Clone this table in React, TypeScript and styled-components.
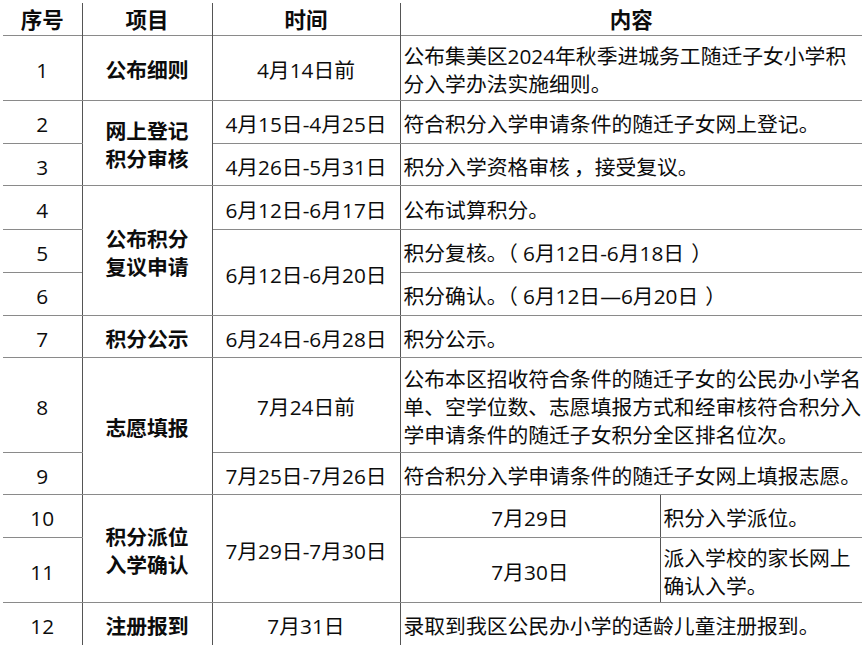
import styled, { createGlobalStyle } from "styled-components";

const GlobalStyle = createGlobalStyle`
  html, body {
    margin: 0;
    padding: 0;
    background: #fff;
  }
  body {
    font-family: "Open Sans", "Noto Sans CJK SC", sans-serif;
    color: #0c0c0c;
  }
`;

const Page = styled.div`
  padding: 3px 0 0 3px;
  width: 864px;
  height: 645px;
  box-sizing: border-box;
  overflow: hidden;
`;

const Table = styled.table`
  width: 859px;
  table-layout: fixed;
  border-collapse: collapse;
  font-size: 20.8px;
  line-height: 28px;
`;

const Row = styled.tr<{ $h: number }>`
  height: ${(p) => p.$h}px;
`;

const Cell = styled.td`
  padding: 5px 4px 0;
  vertical-align: middle;
  border-top: 1px solid #8a8a8a;
  border-bottom: 1px solid #8a8a8a;
  border-left: 1px solid #555;
  border-right: 1px solid #555;
  text-align: center;
  white-space: nowrap;
  &:first-child {
    border-left: none;
  }
  &:last-child {
    border-right: none;
  }
  tr:last-child > & {
    border-bottom: none;
  }
`;

const HeadCell = styled(Cell).attrs({ as: "th" })`
  border-top: none;
  font-weight: 700;
  font-size: 21.5px;
  padding-top: 3px;
`;

const SeqCell = styled(Cell)``;

const ItemCell = styled(Cell)`
  font-weight: 700;
`;

const TimeCell = styled(Cell)``;

const ContentCell = styled(Cell)`
  text-align: left;
  padding-left: 3px;
`;

// full-width punctuation gets a little air, as in the original rendering
const OpenParen = styled.span`
  margin-right: 5px;
`;

const CloseParen = styled.span`
  margin-left: 7px;
`;

const Comma = styled.span`
  padding-left: 4px;
`;

export default function App() {
  return (
    <>
      <GlobalStyle />
      <Page>
        <Table>
          <colgroup>
            <col style={{ width: 79 }} />
            <col style={{ width: 130 }} />
            <col style={{ width: 188 }} />
            <col style={{ width: 260 }} />
            <col style={{ width: 202 }} />
          </colgroup>
          <thead>
            <Row $h={32}>
              <HeadCell>序号</HeadCell>
              <HeadCell>项目</HeadCell>
              <HeadCell>时间</HeadCell>
              <HeadCell colSpan={2}>内容</HeadCell>
            </Row>
          </thead>
          <tbody>
            <Row $h={65}>
              <SeqCell>1</SeqCell>
              <ItemCell>公布细则</ItemCell>
              <TimeCell>4月14日前</TimeCell>
              <ContentCell colSpan={2}>
                公布集美区2024年秋季进城务工随迁子女小学积
                <br />
                分入学办法实施细则。
              </ContentCell>
            </Row>
            <Row $h={43}>
              <SeqCell>2</SeqCell>
              <ItemCell rowSpan={2}>
                网上登记
                <br />
                积分审核
              </ItemCell>
              <TimeCell>4月15日-4月25日</TimeCell>
              <ContentCell colSpan={2}>符合积分入学申请条件的随迁子女网上登记。</ContentCell>
            </Row>
            <Row $h={42}>
              <SeqCell>3</SeqCell>
              <TimeCell>4月26日-5月31日</TimeCell>
              <ContentCell colSpan={2}>
                积分入学资格审核<Comma>，</Comma>接受复议。
              </ContentCell>
            </Row>
            <Row $h={44}>
              <SeqCell>4</SeqCell>
              <ItemCell rowSpan={3}>
                公布积分
                <br />
                复议申请
              </ItemCell>
              <TimeCell>6月12日-6月17日</TimeCell>
              <ContentCell colSpan={2}>公布试算积分。</ContentCell>
            </Row>
            <Row $h={43}>
              <SeqCell>5</SeqCell>
              <TimeCell rowSpan={2}>6月12日-6月20日</TimeCell>
              <ContentCell colSpan={2}>
                积分复核。<OpenParen>（</OpenParen>6月12日-6月18日<CloseParen>）</CloseParen>
              </ContentCell>
            </Row>
            <Row $h={43}>
              <SeqCell>6</SeqCell>
              <ContentCell colSpan={2}>
                积分确认。<OpenParen>（</OpenParen>6月12日—6月20日<CloseParen>）</CloseParen>
              </ContentCell>
            </Row>
            <Row $h={42}>
              <SeqCell>7</SeqCell>
              <ItemCell>积分公示</ItemCell>
              <TimeCell>6月24日-6月28日</TimeCell>
              <ContentCell colSpan={2}>积分公示。</ContentCell>
            </Row>
            <Row $h={95}>
              <SeqCell>8</SeqCell>
              <ItemCell rowSpan={2}>志愿填报</ItemCell>
              <TimeCell>7月24日前</TimeCell>
              <ContentCell colSpan={2}>
                公布本区招收符合条件的随迁子女的公民办小学名
                <br />
                单、空学位数、志愿填报方式和经审核符合积分入
                <br />
                学申请条件的随迁子女积分全区排名位次。
              </ContentCell>
            </Row>
            <Row $h={42}>
              <SeqCell>9</SeqCell>
              <TimeCell>7月25日-7月26日</TimeCell>
              <ContentCell colSpan={2}>符合积分入学申请条件的随迁子女网上填报志愿。</ContentCell>
            </Row>
            <Row $h={43}>
              <SeqCell>10</SeqCell>
              <ItemCell rowSpan={2}>
                积分派位
                <br />
                入学确认
              </ItemCell>
              <TimeCell rowSpan={2}>7月29日-7月30日</TimeCell>
              <TimeCell>7月29日</TimeCell>
              <ContentCell>积分入学派位。</ContentCell>
            </Row>
            <Row $h={65}>
              <SeqCell>11</SeqCell>
              <TimeCell>7月30日</TimeCell>
              <ContentCell>
                派入学校的家长网上
                <br />
                确认入学。
              </ContentCell>
            </Row>
            <Row $h={43}>
              <SeqCell>12</SeqCell>
              <ItemCell>注册报到</ItemCell>
              <TimeCell>7月31日</TimeCell>
              <ContentCell colSpan={2}>录取到我区公民办小学的适龄儿童注册报到。</ContentCell>
            </Row>
          </tbody>
        </Table>
      </Page>
    </>
  );
}
